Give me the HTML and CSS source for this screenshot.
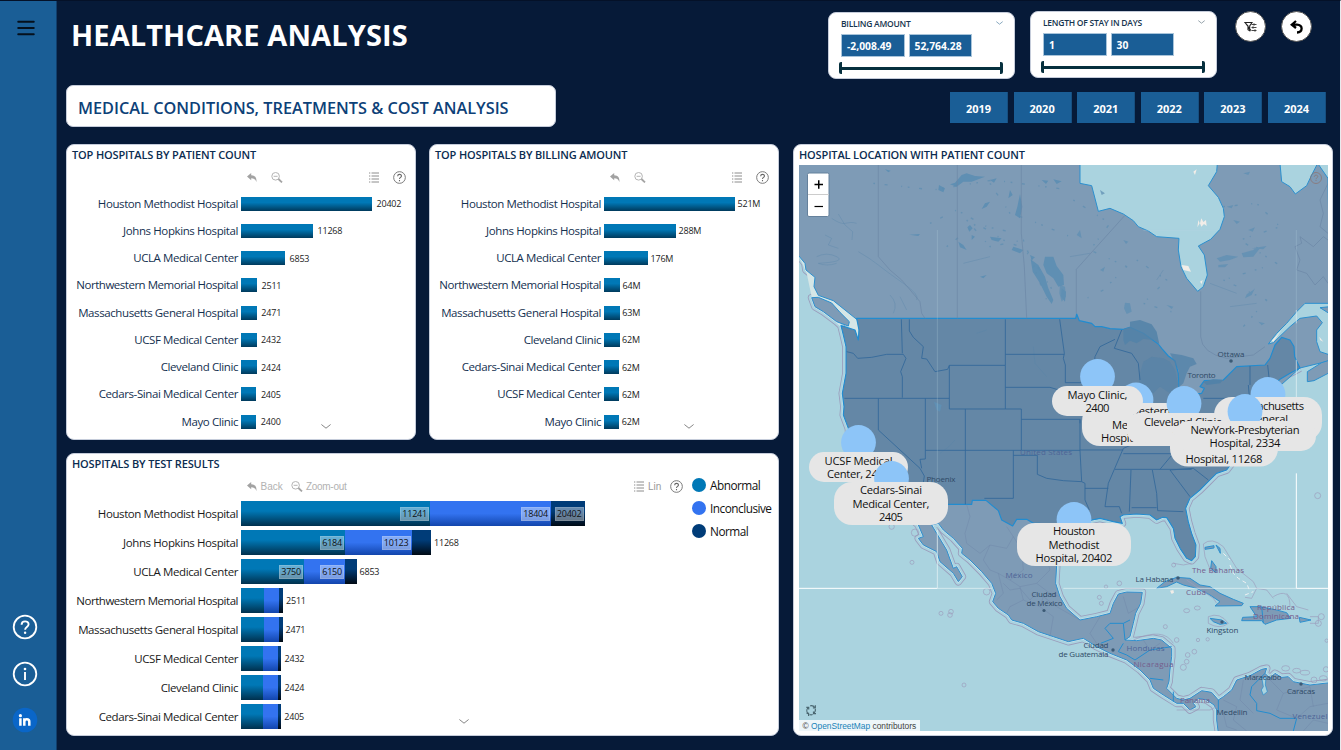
FILE: index.html
```html
<!DOCTYPE html>
<html lang="en">
<head>
<meta charset="utf-8">
<title>Healthcare Analysis</title>
<link rel="stylesheet" href="styles.css">
</head>
<body>
<svg width="0" height="0" class="defs">
  <defs>
    <symbol id="i-back" viewBox="0 0 10 10"><path d="M0 3.6 4.2 0v2.2C8 2.3 9.8 4.6 9.4 9 8.6 6.6 7.2 5.3 4.2 5.2v2.1z" fill="#a2a2a2"/></symbol>
    <symbol id="i-zoom" viewBox="0 0 12 11"><circle cx="4.6" cy="4.3" r="3.8" fill="none" stroke="#b4b4b4"/><path d="M2.6 4.3h4" stroke="#b4b4b4"/><path d="m7.4 7 3.6 3.4" stroke="#a4a4a4" stroke-width="1.8"/></symbol>
    <symbol id="i-list" viewBox="0 0 10 11"><path d="M2.5 1h7.500M2.500 4h7.500M2.500 7h7.500M2.500 10h7.500" stroke="#8c8c8c" fill="none"/><path d="M0 1h1.300M0 4h1.300M0 7h1.300M0 10h1.300" stroke="#8c8c8c"/></symbol>
    <symbol id="i-help" viewBox="0 0 12 12"><circle cx="6" cy="6" r="5.400" fill="none" stroke="#777" stroke-width=".9"/><path d="M4.300 4.800c0-2.300 3.500-2.200 3.500-.2 0 1.300-1.800 1.300-1.800 2.800M6 8.300v1.100" fill="none" stroke="#666" stroke-width="1"/></symbol>
    <symbol id="i-down" viewBox="0 0 10 5"><path d="M.4.5 5 4.200 9.600.5" fill="none" stroke="#777" stroke-width=".9"/></symbol>
  </defs>
</svg>
<div class="app">
  <nav class="sidebar">
    <svg class="burger" width="18" height="16" viewBox="0 0 18 16"><path d="M1.200 1.700h15.600M1.200 8h15.600M1.200 14.200h15.600" stroke="#05101c" stroke-width="1.900" stroke-linecap="round"/></svg>
    <div class="links">
      <svg width="26" height="26" viewBox="0 0 26 26"><circle cx="13" cy="13" r="11.300" fill="none" stroke="#fff" stroke-width="1.800"/><path d="M9.600 10.700c0-4.500 7-4.300 7-.4 0 2.700-3.500 2.700-3.500 5.400" fill="none" stroke="#fff" stroke-width="1.900"/><circle cx="13.100" cy="18.700" r="1.200" fill="#fff"/></svg>
      <svg width="26" height="26" viewBox="0 0 26 26"><circle cx="13" cy="13" r="11.300" fill="none" stroke="#fff" stroke-width="1.800"/><path d="M13 11v8" stroke="#fff" stroke-width="1.900"/><circle cx="13" cy="8" r="1.300" fill="#fff"/></svg>
      <svg width="26" height="26" viewBox="0 0 26 26"><circle cx="13" cy="13" r="12.300" fill="#0a66c8"/><circle cx="8.400" cy="8.700" r="1.600" fill="#fff"/><path d="M8.400 11.200v7.600M12.300 18.800v-7.600M12.300 14.800c0-3.300 5-3.300 5 0v4" fill="none" stroke="#fff" stroke-width="2.500"/></svg>
    </div>
  </nav>
  <main class="main">
    <header class="header">
      <div class="heading">
        <h1>HEALTHCARE ANALYSIS</h1>
        <div class="subtitle"><span>MEDICAL CONDITIONS, TREATMENTS &amp; COST ANALYSIS</span></div>
      </div>
      <div class="controls">
        <div class="filters">
          <section class="slicer">
            <div class="slicer-head"><span class="n1">BILLING AMOUNT</span><svg width="7" height="4" viewBox="0 0 10 5"><path d="M.4.500 5 4.200 9.600.5" fill="none" stroke="#7da0b8" stroke-width="1.300"/></svg></div>
            <div class="inputs"><span>-2,008.49</span><span>52,764.28</span></div>
            <div class="range"></div>
          </section>
          <section class="slicer second">
            <div class="slicer-head"><span class="n2">LENGTH OF STAY IN DAYS</span><svg width="7" height="4" viewBox="0 0 10 5"><path d="M.4.500 5 4.200 9.600.5" fill="none" stroke="#8c9ba3" stroke-width="1.300"/></svg></div>
            <div class="inputs"><span>1</span><span>30</span></div>
            <div class="range"></div>
          </section>
          <button class="round"><svg width="14" height="12" viewBox="0 0 14 12"><path d="M1 1.500h7L5.700 5v4.800L4 8.600V5zM1 1.500l6 8" fill="none" stroke="#222" stroke-width="1.100"/><path d="M7.500 3.500h5M7.500 6.500h5M7.500 9.500h5M10 2.300v2.400M9 5.300v2.400M11 8.300v2.400" stroke="#333" stroke-width=".9"/></svg></button>
          <button class="round"><svg width="14" height="14" viewBox="0 0 14 14"><path d="M6 1 1.800 4.600 6 8M2.300 4.600H7c6.300.1 6 7.800 0 7.900" fill="none" stroke="#000" stroke-width="2.300"/></svg></button>
        </div>
        <div class="years"><button>2019</button><button>2020</button><button>2021</button><button>2022</button><button>2023</button><button>2024</button></div>
      </div>
    </header>
    <div class="board">
      <div class="charts">
        <section class="card bars">
          <h2>TOP HOSPITALS BY PATIENT COUNT</h2>
          <div class="tools"><svg width="10" height="10"><use href="#i-back"/></svg><svg class="zo" width="12" height="11"><use href="#i-zoom"/></svg><svg class="li" width="10" height="11"><use href="#i-list"/></svg><svg class="he" width="13" height="13"><use href="#i-help"/></svg></div>
          <div class="row"><span class="name">Houston Methodist Hospital</span><i style="width:131px"></i><b>20402</b></div>
          <div class="row"><span class="name">Johns Hopkins Hospital</span><i style="width:72px"></i><b>11268</b></div>
          <div class="row"><span class="name">UCLA Medical Center</span><i style="width:44px"></i><b>6853</b></div>
          <div class="row"><span class="name wide">Northwestern Memorial Hospital</span><i style="width:16px"></i><b>2511</b></div>
          <div class="row"><span class="name">Massachusetts General Hospital</span><i style="width:15.800px"></i><b>2471</b></div>
          <div class="row"><span class="name">UCSF Medical Center</span><i style="width:15.600px"></i><b>2432</b></div>
          <div class="row"><span class="name">Cleveland Clinic</span><i style="width:15.500px"></i><b>2424</b></div>
          <div class="row"><span class="name">Cedars-Sinai Medical Center</span><i style="width:15.400px"></i><b>2405</b></div>
          <div class="row"><span class="name">Mayo Clinic</span><i style="width:15.300px"></i><b>2400</b></div>
          <svg class="more" width="10" height="5"><use href="#i-down"/></svg>
        </section>
        <section class="card bars money">
          <h2>TOP HOSPITALS BY BILLING AMOUNT</h2>
          <div class="tools"><svg width="10" height="10"><use href="#i-back"/></svg><svg class="zo" width="12" height="11"><use href="#i-zoom"/></svg><svg class="li" width="10" height="11"><use href="#i-list"/></svg><svg class="he" width="13" height="13"><use href="#i-help"/></svg></div>
          <div class="row"><span class="name">Houston Methodist Hospital</span><i style="width:131px"></i><b>521M</b></div>
          <div class="row"><span class="name">Johns Hopkins Hospital</span><i style="width:72px"></i><b>288M</b></div>
          <div class="row"><span class="name">UCLA Medical Center</span><i style="width:44px"></i><b>176M</b></div>
          <div class="row"><span class="name wide">Northwestern Memorial Hospital</span><i style="width:16px"></i><b>64M</b></div>
          <div class="row"><span class="name">Massachusetts General Hospital</span><i style="width:15.800px"></i><b>63M</b></div>
          <div class="row"><span class="name">Cleveland Clinic</span><i style="width:15.500px"></i><b>62M</b></div>
          <div class="row"><span class="name">Cedars-Sinai Medical Center</span><i style="width:15.400px"></i><b>62M</b></div>
          <div class="row"><span class="name">UCSF Medical Center</span><i style="width:15.400px"></i><b>62M</b></div>
          <div class="row"><span class="name">Mayo Clinic</span><i style="width:15.300px"></i><b>62M</b></div>
          <svg class="more" width="10" height="5"><use href="#i-down"/></svg>
        </section>
        <section class="card tests">
          <h2>HOSPITALS BY TEST RESULTS</h2>
          <div class="tools"><svg width="10" height="10"><use href="#i-back"/></svg><span class="back">Back</span><svg width="12" height="11"><use href="#i-zoom"/></svg><span class="zoomout">Zoom-out</span><svg class="li" width="10" height="11"><use href="#i-list"/></svg><span class="lin">Lin</span><svg class="he" width="13" height="13"><use href="#i-help"/></svg></div>
          <ul class="legend"><li class="ab">Abnormal</li><li class="inc">Inconclusive</li><li class="no">Normal</li></ul>
          <div class="stack"><span class="name">Houston Methodist Hospital</span><i class="ab" style="width:189px"><b>11241</b></i><i class="inc" style="width:121px"><b>18404</b></i><i class="no" style="width:33.500px"><b>20402</b></i></div>
          <div class="stack"><span class="name">Johns Hopkins Hospital</span><i class="ab" style="width:104px"><b>6184</b></i><i class="inc" style="width:66.500px"><b>10123</b></i><i class="no" style="width:19.500px"></i><em>11268</em></div>
          <div class="stack"><span class="name">UCLA Medical Center</span><i class="ab" style="width:63px"><b>3750</b></i><i class="inc" style="width:41px"><b>6150</b></i><i class="no" style="width:11.500px"></i><em>6853</em></div>
          <div class="stack"><span class="name wide">Northwestern Memorial Hospital</span><i class="ab" style="width:23px"></i><i class="inc" style="width:15px"></i><i class="no" style="width:4px"></i><em>2511</em></div>
          <div class="stack"><span class="name">Massachusetts General Hospital</span><i class="ab" style="width:23px"></i><i class="inc" style="width:14.500px"></i><i class="no" style="width:4px"></i><em>2471</em></div>
          <div class="stack"><span class="name">UCSF Medical Center</span><i class="ab" style="width:22.300px"></i><i class="inc" style="width:14.700px"></i><i class="no" style="width:3.500px"></i><em>2432</em></div>
          <div class="stack"><span class="name">Cleveland Clinic</span><i class="ab" style="width:22.300px"></i><i class="inc" style="width:14.700px"></i><i class="no" style="width:3.500px"></i><em>2424</em></div>
          <div class="stack"><span class="name">Cedars-Sinai Medical Center</span><i class="ab" style="width:22.300px"></i><i class="inc" style="width:14.700px"></i><i class="no" style="width:3.300px"></i><em>2405</em></div>
          <svg class="more" width="10" height="5"><use href="#i-down"/></svg>
        </section>
      </div>
      <section class="card location">
        <h2>HOSPITAL LOCATION WITH PATIENT COUNT</h2>
        <div class="map">
        <svg width="529" height="566" viewBox="799 165 529 566">
          <rect x="799" y="165" width="529" height="566" fill="#aad3df"/>
          <g transform="translate(790 140) scale(.333333)" fill="none" stroke-linejoin="round">
            <defs>
              <path id="pac" d="M27 348 45 370 48 390 75 412 72 440 85 466 65 473 75 500 100 515 140 545 153 557 160 585 168 620 168 700 157 760 162 800 160 825 175 865 180 910 210 960 250 1010 300 1080 385 1155 400 1190 385 1195 400 1215 440 1235 450 1265 490 1300 505 1325 517 1310 500 1280 490 1285 470 1230 440 1180 425 1155 445 1150 460 1170 490 1195 517 1225 515 1240 540 1260 575 1295 605 1330 617 1360 608 1385 625 1405 655 1425 665 1440 700 1450 745 1475 790 1490 835 1505 880 1495 920 1520 960 1540 1010 1560 1050 1590 1080 1620 1090 1645 1120 1665 1160 1690 1180 1690 1200 1710 1218 1700 1210 1690 1225 1675 1250 1680 1272 1695 1280 1710 1280 1740 1285 1773"/>
              <path id="atl" d="M1530 684 1500 700 1470 718 1450 735 1455 790 1400 830 1360 880 1330 920 1325 970 1310 990 1280 1000 1255 1025 1230 1050 1200 1075 1187 1105 1195 1145 1205 1180 1218 1215 1216 1250 1205 1262 1190 1255 1170 1225 1155 1195 1150 1165 1130 1133 1118 1132 1100 1140 1080 1125 1040 1122 1000 1125 990 1130 997 1150 970 1145 930 1135 905 1140 860 1170 820 1205 800 1275 797 1330 810 1370 830 1405 870 1440 920 1430 960 1420 970 1390 985 1362 1010 1356 1057 1357 1052 1390 1037 1420 1030 1450 1020 1490 1005 1500 1040 1502 1090 1495 1115 1500 1145 1525 1145 1550 1140 1590 1137 1625 1130 1645 1145 1660 1160 1675 1180 1680 1200 1675 1235 1652 1265 1657 1285 1680 1300 1670 1325 1650 1340 1620 1380 1607 1415 1588 1430 1585 1425 1600 1440 1615 1455 1600 1475 1612 1495 1610 1510 1625 1560 1635 1614 1628"/>
            </defs>
            <g stroke="#9b9cbb" stroke-width="23"><use href="#pac"/><use href="#atl"/></g>
            <g stroke="#aad3df" stroke-width="18"><use href="#pac"/><use href="#atl"/></g>
            <g stroke="#d3e5ed" stroke-width="6"><use href="#pac"/><use href="#atl"/></g>
            <path d="M27 348 75 412 85 466 130 482 165 510 203 538 205 600 190 570 165 555 120 500 65 470 50 400z" fill="#d5e6e6"/>
            <g fill="#7e9bb6" stroke="#2b90cf" stroke-width="3">
              <path d="M20 70H870V130L905 137 925 214 960 205 1000 222 1030 242 1045 260 1075 273 1100 290 1167 295 1165 330 1173 380 1190 415 1223 454 1240 440 1252 405 1243 345 1225 318 1262 298 1290 268 1303 230 1300 205 1285 172 1255 137 1280 95 1282 70H1470L1475 125 1500 140 1516 162 1550 137 1565 105 1583 70 1614 115 1620 490 1545 490 1520 515 1490 550 1460 580 1435 612 1450 608 1500 560 1530 535 1580 528 1597 548 1580 570 1580 605 1590 635 1620 645V662L1530 684 1400 800 1400 830 1360 880 1330 920 1325 970 1000 900 1000 1100 930 1135 905 1140 860 1170 820 1205 800 1275 797 1330 810 1370 830 1405 870 1440 920 1430 960 1420 970 1390 985 1362 1010 1356 1057 1357 1052 1390 1037 1420 1030 1450 1020 1490 1005 1500 1040 1502 1090 1495 1115 1500 1145 1525 1145 1550 1140 1590 1137 1625 1130 1645 1145 1660 1160 1675 1180 1680 1200 1675 1235 1652 1265 1657 1285 1680 1300 1670 1325 1650 1340 1620 1380 1607 1415 1588 1430 1585 1425 1600 1440 1615 1455 1600 1475 1612 1495 1610 1510 1625 1560 1635 1620 1628V1780H1285L1280 1740 1280 1710 1272 1695 1250 1680 1225 1675 1210 1690 1218 1700 1200 1710 1180 1690 1160 1690 1120 1665 1090 1645 1080 1620 1050 1590 1010 1560 960 1540 920 1520 880 1495 835 1505 790 1490 745 1475 700 1450 665 1440 655 1425 625 1405 608 1385 617 1360 605 1330 575 1295 540 1260 515 1240 517 1225 490 1195 460 1170 445 1150 425 1155 440 1180 470 1230 490 1285 500 1280 517 1310 505 1325 490 1300 450 1265 440 1235 400 1215 385 1195 400 1190 385 1155 430 1080 300 700 200 538 165 510 130 482 85 466 72 440 75 412 48 390 45 370 20 340z"/>
              <path d="M65 473 85 472 125 489 150 517 178 545 175 558 140 545 100 515 75 500z"/>
              <path d="M1595 668 1552 695V725L1572 722 1620 697V660z"/>
              <path d="M1590 503 1620 500V522z"/>
              <path d="M1100 1345 1125 1325 1160 1312 1200 1315 1230 1335 1260 1340 1290 1360 1330 1378 1360 1390 1355 1397 1275 1398 1290 1385 1260 1365 1220 1345 1180 1335 1160 1326 1130 1340z"/>
              <path d="M1380 1400 1410 1400 1460 1410 1490 1418 1502 1435 1460 1440 1425 1453 1415 1442 1355 1442 1358 1432 1400 1430z"/>
              <path d="M1260 1435 1295 1440 1310 1450 1290 1453 1270 1445zM1528 1432 1563 1440 1530 1447zM1245 1222 1272 1217V1224L1245 1228zM1278 1215 1290 1225 1291 1240zM1265 1262 1278 1280 1278 1298 1262 1285z"/>
            </g>
            <path fill="#6487a6" stroke="#218cd0" stroke-width="3.500" d="M200 535H857L860 522 868 542 905 550 915 560 935 560 960 566 1000 568 1020 562 1060 580 1105 612 1115 625 1135 648 1155 662 1165 700 1167 740 1180 765 1235 760 1243 745 1230 740 1243 722 1300 720 1340 680 1425 675 1440 655 1455 615 1475 592 1500 600 1512 620 1514 650 1530 684 1500 700 1470 718 1450 735 1455 790 1400 830 1360 880 1330 920 1325 970 1310 990 1280 1000 1255 1025 1230 1050 1200 1075 1187 1105 1195 1145 1205 1180 1218 1215 1216 1250 1205 1262 1190 1255 1170 1225 1155 1195 1150 1165 1130 1133 1118 1132 1100 1140 1080 1125 1040 1122 1000 1125 990 1130 997 1150 970 1145 930 1135 905 1140 860 1170 820 1205 790 1190 750 1150 730 1150 710 1138 680 1138 668 1158 635 1140 625 1112 588 1081H547L545 1093H473L385 1085 300 1060 250 1010 210 960 180 910 175 865 160 825 162 800 157 760 168 700 168 620 160 585 153 557 195 570 205 600 207 570z"/>
            <g fill="#5282a8">
              <path d="M1000 568 1020 560 1020 545 1050 540 1085 553 1100 575 1108 612 1090 600 1060 597 1040 610 1020 602 1005 615 1000 600z" opacity=".85"/>
              <path d="M1060 665 1085 650 1120 655 1140 665 1155 690 1165 735 1140 760 1110 740 1090 760 1060 770 1045 740 1050 700z" opacity=".5"/>
              <path d="M1140 640 1175 645 1210 655 1220 672 1200 680 1190 700 1180 730 1168 740 1165 690 1150 660z" opacity=".75"/>
              <path d="M1240 725 1270 718 1300 720 1290 730 1250 735z"/>
            </g>
            <g fill="#5f8fb3">
              <path d="M480 133 495 128 515 105 530 100 555 108 585 110 545 125 520 125 500 140zM447 135 465 145 460 157 445 150zM765 350 790 350 800 378 820 405 822 435 805 440 790 415 770 400 760 375zM722 358 745 375 765 410 775 445 790 480 785 492 770 470 750 430 728 395zM690 162 697 200 690 235 675 225 682 200zM660 150 668 165 655 175zM815 445 828 455 825 485 813 470zM585 190 600 185 590 200 575 207zM545 285 555 290 545 300zM600 290 635 295 625 305 605 300zM505 305 520 315 530 330 510 322zM540 255 548 265 538 275 532 262zM358 284 390 282 385 288zM285 88 302 92 295 97zM755 120 775 122 768 132zM790 118 815 124 800 132zM432 785 455 795 450 815 440 810zM600 120 620 115 612 128zM570 410 590 405 580 415zM670 320 700 330 690 340 665 330zM720 345 735 352 725 360z"/>
              <path opacity=".75" d="M1005 488 1020 490 1025 515 1010 522 1002 505zM810 435 825 440 828 470 815 485 808 460zM1280 355 1310 345 1345 350 1320 360 1290 365zM1355 340 1390 330 1400 320 1410 325 1390 350 1360 352zM1285 375 1315 372 1305 382 1285 382zM1370 463 1390 450 1395 445 1385 465 1365 475zM1385 325 1430 318 1420 328zM1330 240 1350 245 1340 252zM1375 270 1395 262 1388 275zM930 150 945 160 935 165zM1000 300 1015 305 1008 312zM930 390 945 380 940 395zM860 285 870 270 875 295zM1130 495 1150 500 1145 507zM1405 545 1425 550 1415 556zM1310 200 1330 195 1325 205zM1360 100 1380 95 1375 105z"/>
            </g>
            <g stroke="#5c8db1" stroke-width="4" stroke-dasharray="5 29 9 41 3 17" opacity=".7">
              <path d="M470 320 560 250 640 300 700 325 740 375 800 470M530 240 600 320 700 300 770 480M420 250 500 210 590 260 680 280M600 130 660 220 720 240 840 290M850 180 960 250 900 330 1010 380 940 450 880 480M1300 200 1400 190 1470 260 1350 300 1460 370 1300 420 1430 480 1360 560M1040 360 1130 420 1060 490 1160 520M250 130 430 150 610 120 840 150"/>
            </g>
            <g stroke="#5583a9" stroke-width="1.500" opacity=".65">
              <path d="M145 222 165 255 188 275 186 300M105 285 125 295 115 315 145 325M125 235C170 265 165 240 200 250M80 350Q110 335 140 350T85 370Q110 380 140 370M205 335Q240 355 265 375T340 430 380 480M300 465Q325 490 310 520M520 370 600 350M840 350 900 340M1320 500 1400 490M1260 430 1340 460M560 580 590 570M730 620 735 670 770 710M450 940Q480 920 495 900M330 470 350 510M1100 420 1120 390"/>
            </g>
            <g stroke="#6b86a6" stroke-width="2">
              <path d="M265 75V350L300 390 335 420 390 485 395 520 405 535M502 75V535M694 75V280L703 380 710 535M859 520V388L1003 228M1232 454V590Q1235 640 1310 655L1390 645 1425 620M1515 320 1535 310 1530 290 1570 320 1600 290 1614 300M1515 320 1530 360 1520 390 1550 400 1575 435 1600 410 1614 430M1614 130 1590 180 1600 220 1590 260 1614 280"/>
            </g>
            <g stroke="#33689a" stroke-width="2.600">
              <path d="M170 635 190 640 203 655 245 652 290 643H340L348 655 332 695 337 710V773M334 538 337 640M358 538V573L370 592 400 620 395 655 410 657 435 695 473 688 478 676H646V538M163 775H478M478 676V807H646V676M646 643H823M646 742H780L800 748 830 750M809 538 823 640 820 655 826 675V728H875M526 807V1093M646 807H694V931M694 838H870M265 775V870L390 985 403 1008 395 1060 385 1085M406 775V957L390 958 395 985M406 931H694M670 931V1075H583M670 946H742V1003L770 1015 820 1022 875 1025 885 1030V1080L898 1110M694 931H870M870 838V931L875 1025M885 1045H955M870 850 870 838M1000 900 1025 890M1060 900 1000 925 985 960 955 1030 945 1100H988L995 1120M1023 990 1018 1115M1087 990 1100 1060 1103 1112M975 988H1205M1000 941H1150M1025 1103H1100M1103 1112 1180 1115M1140 990 1170 1030 1200 1070M1140 990 1210 985 1255 1020M1205 870 1150 940 1110 988M1380 678V735M1433 675 1440 740M1240 775H1375M975 598 930 620 915 650 910 700M995 570 973 625 1025 640 1045 670 1050 720M1070 780V900M1150 780V880M870 930H1000M1375 735 1380 790 1430 780"/>
            </g>
            <g stroke="#238dcf" stroke-width="3">
              <path d="M932 1510 970 1495 945 1465 960 1450H1000L1005 1500M1000 1450 1020 1440M1000 1510 985 1535 1010 1545 1035 1560 1050 1550 1080 1530 1145 1520M1080 1615 1120 1620M1150 1655V1685M1285 1680V1720M1425 1600 1385 1640 1380 1665 1400 1690V1712L1440 1720 1470 1735H1520L1510 1773M1415 1400 1420 1450"/>
            </g>
            <g stroke="#6d83a7" stroke-width="1.500" opacity=".8">
              <path d="M530 1093 540 1130 525 1180 530 1210 570 1240 600 1215 650 1225 670 1190 650 1160M600 1215 580 1260 600 1290 625 1300 660 1320 700 1290 695 1230 670 1190M625 1300 640 1360 620 1380M660 1320 690 1340 740 1330 780 1290 760 1220 700 1200M690 1340 700 1380 660 1400 650 1420M700 1380 750 1400 790 1430 780 1490M740 1330 780 1360 810 1370M750 1400 760 1370 800 1400 870 1440M930 1430 900 1480 920 1510M1000 1370 1015 1420 1050 1400M1060 1500 1080 1530 1110 1510M1300 1680 1340 1700 1330 1740 1370 1773M1360 1620 1350 1680 1390 1720M1440 1620 1480 1660 1560 1640M1480 1660 1460 1710 1520 1735 1560 1700 1614 1690M1560 1640 1570 1700M1540 1773 1570 1740 1614 1750M1300 1720 1310 1760 1340 1770M640 1330 660 1350 690 1345 720 1380 740 1360"/>
            </g>
            <path d="M1415 1612 1420 1640 1414 1650 1420 1665 1432 1655 1426 1635 1428 1612z" fill="#aad3df" stroke="#238dcf" stroke-width="2"/>
            <g stroke="#9b9cbb" stroke-width="2">
              <path d="M1240 1212Q1265 1190 1300 1220L1340 1285 1390 1325 1400 1345 1430 1350 1450 1375M1240 1212 1245 1250 1265 1300M1400 1345 1385 1375 1365 1372M1190 1320 1270 1375 1280 1390M1030 1500Q1120 1460 1150 1510M1255 1430Q1290 1415 1315 1450 1290 1470 1255 1450zM1160 1710H1260L1280 1700M1490 1360 1520 1400 1555 1410M1450 1370Q1500 1340 1500 1400M1560 1430H1585V1450H1560M1150 1270 1180 1275 1205 1270"/>
              <circle cx="305" cy="1160" r="8"/><circle cx="366" cy="1267" r="6"/><circle cx="453" cy="1420" r="6"/><circle cx="483" cy="1415" r="7"/><circle cx="480" cy="1425" r="7"/><circle cx="522" cy="1635" r="6"/><circle cx="375" cy="1178" r="11"/><circle cx="590" cy="1355" r="10"/><circle cx="988" cy="1330" r="7"/><circle cx="948" cy="1340" r="5"/><circle cx="928" cy="1372" r="6"/><circle cx="934" cy="1390" r="6"/><ellipse cx="1190" cy="1412" rx="9" ry="6"/><ellipse cx="1222" cy="1404" rx="9" ry="6"/><circle cx="1126" cy="1460" r="6"/><circle cx="1224" cy="1500" r="5"/><circle cx="1253" cy="1498" r="5"/><circle cx="1213" cy="1535" r="7"/><circle cx="1193" cy="1545" r="7"/><circle cx="1190" cy="1565" r="7"/><circle cx="1180" cy="1582" r="9"/><circle cx="1583" cy="1067" r="9"/><circle cx="1151" cy="1275" r="6"/><circle cx="1610" cy="1502" r="5"/><circle cx="1160" cy="1500" r="7"/><ellipse cx="1487" cy="1585" rx="12" ry="8"/><ellipse cx="1520" cy="1592" rx="12" ry="7"/><ellipse cx="1545" cy="1598" rx="14" ry="7"/><circle cx="1572" cy="1620" r="9"/><ellipse cx="1600" cy="1615" rx="12" ry="8"/><circle cx="1594" cy="1430" r="9"/><circle cx="1585" cy="1450" r="9"/><circle cx="1608" cy="1588" r="8"/>
            </g>
            <path d="M1175 375 1195 378 1203 395 1180 390zM1225 240 1229 250 1222 262zM1234 235 1240 246 1248 240 1250 258 1242 252 1234 260 1230 250zM1230 425 1238 420 1235 432zM1445 602 1475 570 1450 605zM1585 575 1590 600 1600 605 1588 590zM1210 95 1220 88 1215 105zM1140 1352 1150 1350 1152 1358 1145 1362z" fill="#f1ede8"/>
            <path d="M1320 1275 1330 1300 1345 1315 1370 1330 1380 1355M1300 1240 1320 1260M1365 1365 1390 1355" stroke="#eef0f2" stroke-width="3" stroke-dasharray="12 9"/>
            <path d="M442 270V1345" stroke="#c8dfeb" stroke-width="2" opacity=".35"/>
            <path d="M27 1345H442M1519 1000V1345H1614" stroke="#fff" stroke-width="3"/>
            <path d="M442 1345H605M820 1345H1519M442 1170V1345M1519 660V800M1519 510V550" stroke="#eef7fa" stroke-width="2.500" opacity=".75"/>
            <path d="M1519 270V660M1060 271H1280" stroke="#bcd4df" stroke-width="2" opacity=".4"/>
          </g>
          <g class="places">
            <text x="1231" y="357" textLength="27">Ottawa</text><circle cx="1231" cy="361" r="1.800"/>
            <text x="1201.500" y="378" textLength="28">Toronto</text>
            <text x="941" y="482" textLength="29">Phoenix</text>
            <text class="country" x="1046" y="455" textLength="52">United States</text>
            <text class="country" x="1019" y="578" textLength="27">México</text>
            <text x="1044" y="597" textLength="25">Ciudad</text><text x="1044.500" y="606" textLength="36">de México</text><circle cx="1044" cy="610.500" r="1.600"/>
            <text class="region" x="1218" y="573" textLength="52">The Bahamas</text>
            <text x="1154.500" y="582" textLength="38">La Habana</text><circle cx="1178" cy="578" r="1.800"/>
            <text class="region" x="1196" y="595" textLength="20">Cuba</text>
            <text class="region" x="1276" y="610" textLength="38">República</text><text class="region" x="1276" y="619" textLength="46">Dominicana</text>
            <text x="1222.500" y="633" textLength="32">Kingston</text><circle cx="1222" cy="622" r="1.700"/>
            <text x="1096" y="648" textLength="25">Ciudad</text><text x="1083.500" y="657" textLength="50">de Guatemala</text><circle cx="1113" cy="650" r="1.700"/>
            <text class="country" x="1145.500" y="651" textLength="38">Honduras</text>
            <text class="region" x="1153.500" y="667" textLength="40">Nicaragua</text>
            <text class="region" x="1195" y="703" textLength="30">Panama</text>
            <text x="1263" y="680" textLength="37">Maracaibo</text>
            <text x="1301" y="694" textLength="28">Caracas</text><circle cx="1301" cy="684" r="1.700"/>
            <text x="1232" y="715" textLength="31">Medellin</text>
            <text class="country" x="1310" y="719" textLength="35">Venezuel</text>
          </g>
          <g class="pins">
            <circle cx="858.500" cy="442.500" r="17.400"/>
            <rect x="809" y="452" width="99" height="30" rx="15"/>
            <text x="858.500" y="464.500" textLength="68">UCSF Medical</text><text x="858.500" y="478" textLength="63">Center, 2432</text>
            <circle cx="891.500" cy="478.500" r="17.400"/>
            <rect x="834" y="482" width="114" height="43" rx="18"/>
            <text x="891" y="494" textLength="62">Cedars-Sinai</text><text x="891" y="507.500" textLength="77">Medical Center,</text><text x="891" y="521" textLength="24">2405</text>
            <circle cx="1136" cy="400" r="17.400"/>
            <rect x="1082" y="403" width="108" height="43" rx="18"/>
            <text x="1136" y="414.500" textLength="69">Northwestern</text><text x="1136" y="428.500" textLength="48">Memorial</text><text x="1136" y="442" textLength="70">Hospital, 2511</text>
            <circle cx="1097.500" cy="376.500" r="17.400"/>
            <rect x="1052" y="386" width="91" height="30" rx="15"/>
            <text x="1097.500" y="398.500" textLength="60">Mayo Clinic,</text><text x="1097.500" y="412" textLength="24">2400</text>
            <circle cx="1268" cy="394.500" r="17.400"/>
            <rect x="1214" y="397" width="108" height="44" rx="18"/>
            <text x="1268" y="409.500" textLength="72">Massachusetts</text><text x="1268" y="423" textLength="40">General</text>
            <rect x="1127" y="413" width="112" height="30" rx="12"/>
            <circle cx="1184" cy="403.500" r="17.400"/>
            <rect x="1143" y="413" width="80" height="30" rx="4"/>
            <text x="1184" y="425.500" textLength="80">Cleveland Clinic,</text><text x="1184" y="439.500" textLength="24">2424</text>
            <rect x="1170" y="423" width="108" height="43.500" rx="18"/>
            <text x="1224" y="462.500" textLength="77">Hospital, 11268</text>
            <circle cx="1245" cy="411.500" r="17.400"/>
            <rect x="1174" y="421" width="142" height="30" rx="15"/>
            <text x="1245" y="433.500" textLength="109">NewYork-Presbyterian</text><text x="1245" y="447" textLength="71">Hospital, 2334</text>
            <circle cx="1074" cy="519.500" r="17.400"/>
            <rect x="1017" y="523" width="114" height="43" rx="18"/>
            <text x="1074" y="535" textLength="42">Houston</text><text x="1074" y="548.500" textLength="51">Methodist</text><text x="1074" y="562" textLength="77">Hospital, 20402</text>
          </g>
          <rect x="807.500" y="173" width="21.500" height="43.500" rx="1.500" fill="#fff" stroke="#65819c" stroke-width="1"/>
          <path d="M808 194.500h21" stroke="#ccc"/><path d="M814.500 184.500h8.500M818.750 180.200v8.500" stroke="#000" stroke-width="1.500"/><path d="M814.500 206.500h8.500" stroke="#000" stroke-width="1.200"/>
          <g fill="none" stroke="#8f6f68" opacity=".65"><circle cx="1316" cy="178" r="5.500"/><path d="M1314.300 176.800c0-2.300 3.500-2.200 3.500-.2 0 1.300-1.800 1.300-1.800 2.600M1316 180v1"/></g>
          <g fill="none" stroke="#4a6670" stroke-width="1.200"><path d="M808.300 713.800a4.300 4.300 0 0 1-.4-6M810.200 705.800a4.300 4.300 0 0 1 4.600 1.700M815.300 709a4.300 4.300 0 0 1-1.300 4.300M812.600 714.500a4.300 4.300 0 0 1-3 0"/><path d="M806.300 707.300h2.400v2.200M815.300 705.300v2.500h-2.400M816 713.600h-2.500v-2.200M808.600 716v-2.600h-2"/></g>
        </svg>
        <div class="attrib">© <a>OpenStreetMap</a> contributors</div>
        </div>
      </section>
    </div>
  </main>
</div>
</body>
</html>
```

FILE: styles.css
```css
* { box-sizing: border-box; }
body { margin: 0; background: #061a38; font-family: "Open Sans", "Noto Sans", sans-serif; overflow: hidden; }
button { border: 0; padding: 0; font: inherit; }
h1, h2, ul { margin: 0; padding: 0; }
svg { flex: none; }
.defs { display: block; position: absolute; }
.app { display: flex; width: 1341px; height: 750px; border-right: 1px solid #e9ebee; border-top: 1px solid #041128; }
.sidebar { width: 57px; background: #1a5e96; border-right: 1px solid #123f6c; padding: 19px 0 0 17px; display: flex; flex-direction: column; }
.burger { flex: none; }
.links { margin: auto 0 17px -5px; display: flex; flex-direction: column; gap: 20.500px; }
.main { flex: 1; padding-left: 9px; display: flex; flex-direction: column; }
.header { height: 143px; display: flex; justify-content: space-between; padding-right: 14px; }
.heading h1 { color: #fff; font-size: 29px; font-weight: 700; line-height: 40px; margin: 14px 0 30px 5px; white-space: nowrap; letter-spacing: .1px; }
.subtitle { width: 490px; height: 42px; background: #fff; border: 1px solid #c5ccda; border-radius: 7px; padding-left: 11px; line-height: 44px; font-size: 16.300px; font-weight: 600; color: #0d4178; white-space: nowrap; }
.controls { width: 499px; display: flex; flex-direction: column; justify-content: space-between; align-items: flex-end; padding-bottom: 21px; }
.filters { display: flex; padding-top: 10px; }
.slicer { width: 187px; height: 67px; margin: 1px 15px 0 0; background: #fff; border: 1px solid #c5ccda; border-radius: 8px; padding: 4px 11px 0 12px; }
.slicer.second { margin: 0 18px 0 0; }
.slicer-head { display: flex; justify-content: space-between; align-items: center; height: 13px; font-size: 8.500px; font-weight: 600; color: #16344e; letter-spacing: -.25px; }
.slicer-head svg { margin-top: -1px; }
.inputs { display: flex; gap: 4px; margin-top: 4px; }
.inputs span { width: 63.500px; height: 23px; border: 1px solid #a8c4da; background: #1a5e96; color: #fff; font-size: 10.300px; font-weight: 700; line-height: 23px; padding-left: 5px; }
.range { height: 12px; margin: 5px -1px 0 -2px; width: 164px; border: solid #06303e; border-width: 0 3px; border-radius: 2px; background: linear-gradient(#06303e, #06303e) 0 5px / 100% 3px no-repeat; }
.round { width: 31px; height: 31px; border-radius: 50%; background: #fff; border: 1px solid #555; display: flex; align-items: center; justify-content: center; margin-right: 15px; }
.round:last-child { margin-right: 14px; }
.years { display: flex; gap: 5.600px; }
.years button { width: 58px; height: 31px; background: #1a5e96; color: #fff; font-size: 11px; font-weight: 700; border-right: 1px solid #174f80; padding-top: 1px; }
.board { display: flex; gap: 14px; }
.charts { width: 713px; display: grid; grid-template-columns: 350px 350px; grid-template-rows: 296px 283px; gap: 13px; }
.card { background: #fff; border: 1px solid #c5ccda; border-radius: 8px; padding: 0 5px; position: relative; }
.card h2 { font-size: 11px; font-weight: 600; line-height: 20px; color: #0b2c50; white-space: nowrap; letter-spacing: -.15px; }
.tools { display: flex; align-items: center; height: 25px; padding-left: 175px; }
.tools .zo { margin-left: 14px; }
.tools .li { margin-left: 86px; }
.tools .he { margin-left: 14px; }
.bars .row { display: flex; align-items: center; height: 27.250px; }
.name { flex: none; width: 166px; text-align: right; font-size: 11.500px; line-height: 15px; padding-bottom: 1px; color: #14304f; white-space: nowrap; margin-right: 3px; letter-spacing: -.4px; }
.name.wide { letter-spacing: -.48px; }
.row i { height: 14px; background: linear-gradient(#0078b6 0 40%, #003a5c); }
.row b { font-weight: 400; font-size: 9px; margin-left: 4.500px; color: #222; letter-spacing: -.2px; }
.money .row b { margin-left: 2.500px; }
.more { position: absolute; right: 84px; bottom: 10px; }
.tests { grid-column: 1 / 3; }
.tests .tools { padding-left: 175px; height: 25px; font: 10px "Liberation Sans", sans-serif; color: #b2b2b2; }
.back { width: 31px; padding-left: 3.500px; margin-right: 3px; }
.tests .zoomout { margin-left: 3px; width: 42px; white-space: nowrap; letter-spacing: -.3px; }
.tests .li { margin-left: 286px; }
.lin { margin-left: 4px; width: 13px; color: #999; }
.tests .he { margin-left: 8.500px; }
.legend { position: absolute; left: 625px; top: 20px; list-style: none; }
.legend li { height: 22.700px; display: flex; align-items: center; font-size: 11.800px; color: #111; letter-spacing: -.5px; }
.legend li::before { content: ""; width: 14px; height: 14px; border-radius: 50%; margin-right: 4px; background: #0078b6; }
.legend .inc::before { background: #3373f0; }
.legend .no::before { background: #003c78; }
.stack { display: flex; align-items: center; height: 29px; }
.tests .name { color: #1a1a1a; }
.stack i { flex: none; height: 25px; display: flex; align-items: center; justify-content: flex-end; font-style: normal; }
.stack i.ab { background: linear-gradient(#0078b6 0 40%, #00304d); }
.stack i.inc { background: linear-gradient(#3373f0 0 50%, #1245ac); }
.stack i.no { background: linear-gradient(#003c78 0 40%, #000a14); }
.stack b { background: rgba(255,255,255,.4); border: 1px solid rgba(255,255,255,.15); height: 14px; line-height: 12px; font-size: 9px; font-weight: 400; color: #111; padding: 0 1px; margin-right: 1px; letter-spacing: -.2px; }
.stack em { font-style: normal; font-size: 9px; color: #222; margin-left: 3px; letter-spacing: -.2px; }
.tests .more { right: 309px; bottom: 11px; }
.location { width: 540px; height: 592px; }
.map { position: relative; width: 529px; height: 566px; overflow: hidden; }
.map svg { display: block; }
.attrib { position: absolute; left: 0; bottom: 0; height: 11.500px; width: 121px; padding-left: 3.500px; background: rgba(255,255,255,.8); font: 8.400px/12px "Liberation Sans", sans-serif; color: #444; white-space: nowrap; }
.attrib a { color: #1682b8; }
.places { font-size: 8px; text-anchor: middle; }
.places text { fill: #2f4a66; }
.places circle { fill: #3b5a75; }
.places .country { fill: #4e6596; }
.places .region { fill: #755d8c; }
.pins { font-size: 11.200px; text-anchor: middle; }
.pins circle { fill: #8dc5f8; }
.pins rect { fill: #e6e6e6; }
.pins text { fill: #111; }
```
